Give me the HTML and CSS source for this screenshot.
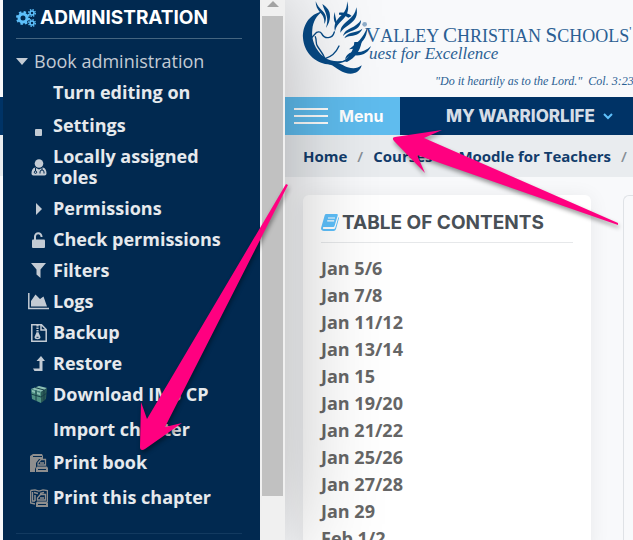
FILE: index.html
```
<!DOCTYPE html>
<html lang="en">
<head>
    <meta charset="UTF-8">
    <meta name="viewport" content="width=device-width, initial-scale=1.0">
    <title>Moodle for Teachers</title>
    <link rel="stylesheet" href="styles.css">
</head>
<body>
    <!-- edge of the page left of the drawer -->
    <div class="page-edge">
        <div class="edge-top"></div>
        <div class="edge-nav"></div>
        <div class="edge-crumbs"></div>
    </div>

    <!-- administration drawer -->
    <aside class="drawer">
        <div class="drawer-content">
            <h2 class="drawer-title">
                <svg class="cogs" width="20" height="20" viewBox="0 0 20 20">
                    <g fill="none" stroke="#5ec0fb">
                        <circle cx="7" cy="10" r="4" stroke-width="3"/>
                        <circle cx="7" cy="10" r="6" stroke-width="2" stroke-dasharray="2.4 2.3"/>
                        <circle cx="16" cy="5" r="2" stroke-width="1.6"/>
                        <circle cx="16" cy="5" r="3.3" stroke-width="1.4" stroke-dasharray="1.4 1.2"/>
                        <circle cx="16" cy="15" r="2" stroke-width="1.6"/>
                        <circle cx="16" cy="15" r="3.3" stroke-width="1.4" stroke-dasharray="1.4 1.2"/>
                    </g>
                </svg>
                ADMINISTRATION
            </h2>
            <button class="tree-toggle" type="button">
                <svg width="12" height="7" viewBox="0 0 12 7"><path d="M0 0h12L6 7z" fill="#c3cbd4"/></svg>
                Book administration
            </button>
            <ul class="tree">
                <li><a href="#"><span class="icon"></span>Turn editing on</a></li>
                <li class="spaced"><a href="#"><span class="icon"><svg class="low" width="7" height="7"><rect width="7" height="7" rx="1" fill="#c3cbd4"/></svg></span>Settings</a></li>
                <li>
                    <a class="two-lines" href="#"><span class="icon"><svg width="16" height="17" viewBox="0 0 16 17">
                        <circle cx="8" cy="4.5" r="4.3" fill="#c3cbd4"/>
                        <path d="M4 8.5 8 10.5l4-2c2.6.7 3.5 3 3.5 6 0 1-.8 2-2 2h-11c-1.2 0-2-1-2-2 0-3 .9-5.3 3.500-6z" fill="#c3cbd4"/>
                        <path d="M4.5 9v3M11 9v2m-2 3.500V13a2 2 0 0 1 4 0v1.500" fill="none" stroke="#012950"/>
                        <circle cx="4.5" cy="13.2" r="1.2" fill="none" stroke="#012950"/>
                    </svg></span>Locally assigned roles</a>
                </li>
                <li><a href="#"><span class="icon"><svg width="6" height="12"><path d="M0 0l6 6-6 6z" fill="#c3cbd4"/></svg></span>Permissions</a></li>
                <li><a href="#"><span class="icon"><svg width="13" height="16" viewBox="0 0 13 16"><path d="M3 6.500V4.500a3.200 3.200 0 0 1 6.500 0V5" fill="none" stroke="#c3cbd4" stroke-width="2"/><rect y="7.5" width="13" height="8.5" rx="1" fill="#c3cbd4"/><path d="M3 6v2" stroke="#c3cbd4" stroke-width="2"/></svg></span>Check permissions</a></li>
                <li><a href="#"><span class="icon"><svg width="15" height="15"><path d="M0 0h15L9.500 6.500V15L5.500 11.500v-5z" fill="#c3cbd4"/></svg></span>Filters</a></li>
                <li><a href="#"><span class="icon"><svg width="21" height="17" viewBox="0 0 21 17"><path d="M.8 0v15.500H21" fill="none" stroke="#c3cbd4" stroke-width="1.5"/><path d="M3 13.500V8l4.500-6.500L12 6l3.500-2.500L19 13.500z" fill="#c3cbd4"/></svg></span>Logs</a></li>
                <li><a href="#"><span class="icon"><svg width="16" height="18" viewBox="0 0 16 18"><path d="M.8.8h9.700l4.700 4.700v11.700H.8zM10 1v5h5" fill="none" stroke="#c3cbd4" stroke-width="1.5"/><path d="M6.500 1v8" stroke="#c3cbd4" stroke-width="2.2" stroke-dasharray="1.5 1"/><path d="M5.500 8.500h2l2 4.500c.4 3-6.400 3-6 0z" fill="#c3cbd4"/><path d="M5.500 13.300h2" stroke="#012950"/></svg></span>Backup</a></li>
                <li><a href="#"><span class="icon"><svg width="12" height="15" viewBox="0 0 12 15"><path d="M8 0l4 5H9.500v10H1.500L0 12.500h6.500V5h-3z" fill="#c3cbd4"/></svg></span>Restore</a></li>
                <li><a href="#"><span class="icon"><svg width="16" height="17" viewBox="0 0 16 17">
                    <path d="M0 3 8 0l8 2-6 4z" fill="#8cc0b4"/>
                    <path d="M0 3l10 3v11L1 13z" fill="#4f9183"/>
                    <path d="M10 6l6-4-1 11-5 4z" fill="#2a5a57"/>
                    <path d="M0 8l10 3 6-4M5 4.500V15M13 4v10.500M4 1.500 13 4" fill="none" stroke="#173f48"/>
                    <path d="M1 4l3 1v2L1 6zM6 6l3 1v2L6 8z" fill="#8cc0b4"/>
                </svg></span>Download IMS CP</a></li>
                <li class="tall"><a href="#"><span class="icon"></span>Import chapter</a></li>
                <li class="spaced"><a href="#"><span class="icon"><svg width="18" height="18" viewBox="0 0 18 18">
                    <path d="M0 2 3 0h9l1 2v3H9L6 9v4l-1 2v3H0z" fill="#8e8e8e"/>
                    <path d="M3 2.500h9" stroke="#012950"/>
                    <path d="M8 11V9l3-3.500h4.500V11zM10 9h4" fill="none" stroke="#8e8e8e" stroke-width="1.3"/>
                    <path d="M7 12.500h10l1 1.500v4H6v-4z" fill="#8e8e8e"/>
                    <path d="M8 15.500h8" stroke="#012950"/>
                </svg></span>Print book</a></li>
                <li class="tall"><a href="#"><span class="icon"><svg width="18" height="18" viewBox="0 0 18 18">
                    <path d="M.6 1.500 5 .8l4 1.200L13 .8l4.400.7V13M5 15l-4.400-1V1.500M2.500 3v9H5" fill="none" stroke="#8e8e8e" stroke-width="1.3"/>
                    <path d="M4 3.500l4 1M14 3.500l-4 1M5 6v6" stroke="#8e8e8e" stroke-width="1.5"/>
                    <path d="M7.500 11V9l3-3.500h5V11zM10 9h4" fill="none" stroke="#8e8e8e" stroke-width="1.3"/>
                    <path d="M7 12.500h10l1 1.500v4H6v-4z" fill="#8e8e8e"/>
                    <path d="M8 15.500h8" stroke="#012950"/>
                </svg></span>Print this chapter</a></li>
            </ul>
        </div>
        <div class="scrollbar">
            <svg width="12" height="6"><path d="M0 6l6-6 6 6z" fill="#a3a3a3"/></svg>
            <div class="thumb"></div>
        </div>
    </aside>

    <!-- course page -->
    <main class="page">
        <header class="site-header">
            <svg class="logo" width="72" height="78" viewBox="0 0 216 234">
                <g fill="#064a86">
                    <!-- Q -->
                    <path d="M72 34C30 42 10 78 12 114c3 42 34 74 74 79 22 3 44-3 58-13-26 7-50 5-69-9C48 150 36 118 40 88c2-22 12-42 32-54z"/>
                    <path d="M120 38c16-2 30 2 38 10l-10 5c-8-6-16-9-28-9z"/>
                    <path d="M166 126h22c-5 28-20 48-44 60l-12-3c20-12 32-32 34-57z"/>
                    <path d="M88 192c20-12 42 4 58 10 16 5 30 4 42-6-5 22-28 30-50 22-22-7-32-22-50-26z"/>
                    <!-- wings -->
                    <path d="M50 4c5 14 12 20 20 28 12 12 14 24 6 40 1-14-2-24-12-34C55 28 50 18 50 4z"/>
                    <path d="M70 12c14 10 24 20 23 38 0 10-4 22-12 34 4-14 5-26 2-36-3-12-9-22-13-36z"/>
                    <path d="M144 4c8 22 2 42-14 56-12 11-19 20-22 34-5-20 4-34 17-46 13-12 20-24 19-44z"/>
                    <path d="M108 36c-1 14 6 22 4 38-8-10-10-24-4-38z"/>
                    <path d="M172 22c6 24-3 40-22 52-12 8-20 14-26 24 0-16 8-24 20-34 15-12 25-22 28-42z"/>
                    <path d="M186 60c0 18-12 28-30 34-10 4-18 8-24 14 4-13 12-18 24-24 13-6 23-13 30-24z"/>
                    <path d="M190 86c-6 14-18 20-34 22-8 1-15 3-20 7 4-10 12-14 22-17 13-3 23-5 32-12z"/>
                    <path d="M204 84c2 30-18 48-40 62l-14 2c24-18 42-34 54-64z"/>
                    <path d="M216 138c-6 18-24 30-48 28-12-1-22 4-30 12 4-16 16-24 34-22 16 1 30-5 44-18z"/>
                </g>
                <!-- dove -->
                <g fill="none" stroke="#064a86" stroke-width="4" stroke-linecap="round">
                    <path d="M39 112l9-10c6-8 16-8 20-1 4 8 10 13 20 12 12-1 16-10 18-17"/>
                    <path d="M49 110c4 10 1 18 5 26 6 12 16 20 24 40"/>
                    <path d="M78 176c20-6 34-20 42-38"/>
                </g>
                <circle cx="197" cy="73" r="7" fill="#8fadc9"/>
            </svg>
            <div class="brand">
                <div class="brand-name"><b>V</b>ALLEY <b>C</b>HRISTIAN <b>S</b>CHOOLS<sup>'</sup></div>
                <div class="brand-tag">uest for Excellence</div>
                <div class="brand-verse">"Do it heartily as to the Lord."&nbsp; Col. 3:23</div>
            </div>
        </header>

        <nav class="navbar">
            <button class="menu-button" type="button">
                <svg width="34" height="16"><path d="M0 1h34M0 8h34M0 15h34" stroke="#fff" stroke-width="2"/></svg>
                Menu
            </button>
            <a class="nav-link" href="#">MY WARRIORLIFE
                <svg width="10" height="7" viewBox="0 0 10 7"><path d="M1 1l4 4 4-4" fill="none" stroke="#5ec0fb" stroke-width="2"/></svg>
            </a>
        </nav>

        <nav class="breadcrumbs">
            <a href="#">Home</a><span>/</span><a href="#">Courses</a><span>/</span><a href="#">Moodle for Teachers</a><span>/</span>
        </nav>

        <div class="columns">
            <section class="toc">
                <h2 class="toc-title">
                    <svg width="18" height="17" viewBox="0 0 18 17">
                        <path d="M5 0h10.500c1 0 1.500.6 1.200 1.500L13.700 11.500c-.3 1-1 1.500-2 1.500H3c-1.500 0-1.500 2 0 2h9.500c1 0 1.500-.4 1.800-1.300L17.500 3c.5.3.6 1 .4 1.600L15 15c-.4 1.300-1.200 2-2.500 2H3c-2 0-3.500-1.600-2.800-3.500L3.500 2C3.800.8 4.200 0 5 0z" fill="#5ec0fb"/>
                        <path d="M7 4h7M6.200 6.800h7" stroke="#fff" stroke-width="1.2"/>
                    </svg>
                    TABLE OF CONTENTS
                </h2>
                <ul>
                    <li><a href="#">Jan 5/6</a></li>
                    <li><a href="#">Jan 7/8</a></li>
                    <li><a href="#">Jan 11/12</a></li>
                    <li><a href="#">Jan 13/14</a></li>
                    <li><a href="#">Jan 15</a></li>
                    <li><a href="#">Jan 19/20</a></li>
                    <li><a href="#">Jan 21/22</a></li>
                    <li><a href="#">Jan 25/26</a></li>
                    <li><a href="#">Jan 27/28</a></li>
                    <li><a href="#">Jan 29</a></li>
                    <li><a href="#">Feb 1/2</a></li>
                </ul>
            </section>
            <section class="content-card"></section>
        </div>
    </main>

    <!-- pointer arrows on top of the page -->
    <svg class="arrows" width="633" height="540" viewBox="0 0 633 540">
        <g fill="#ff0080">
            <path d="M286 184l2 1L165 427l17-4-37 26c-3 2-5 1-5-2l1-45 6 17z"/>
            <path d="M618 223v2L417 155l8 18-31-32c-2-2-1-4 1-4l47-7-18 8z"/>
        </g>
    </svg>
</body>
</html>
```
FILE: styles.css
```
* {
    box-sizing: border-box;
}

body {
    margin: 0;
    display: flex;
    height: 100vh;
    overflow: hidden;
    position: relative;
    font-family: "Open Sans", sans-serif;
    background-color: #f8f9fb;
}

h2, ul {
    margin: 0;
    padding: 0;
}

ul {
    list-style: none;
}

a {
    text-decoration: none;
}

button {
    border: none;
    padding: 0;
    cursor: pointer;
}

/* page edge */
.page-edge {
    flex: 0 0 3px;
    z-index: 2;
    background-color: #f8f9fb;
}

.edge-top {
    height: 97px;
}

.edge-nav {
    height: 38px;
    background-color: #003366;
}

.edge-crumbs {
    height: 41px;
    background-color: #e9ecef;
}

/* drawer */
.drawer {
    flex: 0 0 282px;
    display: flex;
    z-index: 1;
    box-shadow: 0 0 100px rgba(0, 0, 0, 0.3);
}

.drawer-content {
    flex: 1;
    background-color: #012950;
    padding: 5px 18px 0 13px;
}

.drawer-title {
    display: flex;
    align-items: center;
    gap: 4px;
    height: 34px;
    padding-bottom: 8px;
    border-bottom: 1px solid #456580;
    color: #fff;
    font: 700 19px Inter, sans-serif;
    white-space: nowrap;
}

.tree-toggle {
    display: flex;
    align-items: center;
    gap: 6px;
    margin-top: 10px;
    height: 24px;
    background: none;
    color: #c3cbd4;
    font: 18px "Open Sans", sans-serif;
}

.tree {
    padding: 4px 0 20px 12px;
    border-bottom: 1px solid #123a60;
}

.tree a {
    display: flex;
    align-items: center;
    gap: 4px;
    padding: 5px 0;
    color: #e6e9ed;
    font-size: 18px;
    font-weight: 700;
    line-height: 21px;
}

.tree .two-lines {
    padding-right: 40px;
}

.tree .spaced {
    margin-top: 2px;
}

.tree .tall {
    margin-top: 4px;
}

.icon {
    flex: 0 0 21px;
    height: 21px;
    display: flex;
    align-items: center;
    justify-content: center;
}

.icon .low {
    align-self: flex-end;
}

.scrollbar {
    flex: 0 0 25px;
    display: flex;
    flex-direction: column;
    align-items: center;
    gap: 9px;
    padding-top: 1px;
    background-color: #f0f0f0;
}

.thumb {
    width: 21px;
    height: 89%;
    background-color: #c1c1c1;
}

/* page */
.page {
    flex: 1;
    min-width: 0;
    display: flex;
    flex-direction: column;
}

.site-header {
    display: flex;
    flex: 0 0 97px;
    padding-left: 14px;
    color: #2b5f93;
    font-family: "Liberation Serif", serif;
    white-space: nowrap;
}

.logo {
    flex: none;
}

.brand {
    flex: 1;
    margin-left: -6px;
    padding-top: 22px;
}

.brand-name {
    height: 22px;
    font-size: 18px;
    line-height: 26px;
}

.brand-name b {
    font-size: 21px;
    font-weight: 400;
}

.brand-name sup {
    font-size: 12px;
    line-height: 1;
}

.brand-tag {
    padding-left: 4px;
    font-size: 17px;
    font-style: italic;
    line-height: 20px;
}

.brand-verse {
    padding: 8px 0 0 70px;
    font-size: 12px;
    font-style: italic;
    line-height: 18px;
}

.navbar {
    display: flex;
    flex: 0 0 38px;
    background-color: #003366;
}

.menu-button {
    flex: 0 0 115px;
    display: flex;
    align-items: center;
    gap: 11px;
    padding-left: 9px;
    background-color: #5fbcee;
    color: #fff;
    font: 700 16px Inter, sans-serif;
}

.nav-link {
    display: flex;
    align-items: center;
    gap: 8px;
    padding-left: 46px;
    color: #d5dde6;
    font: 800 17px Inter, sans-serif;
    white-space: nowrap;
}

.breadcrumbs {
    display: flex;
    flex: 0 0 42px;
    align-items: center;
    gap: 10px;
    padding-left: 18px;
    background-color: #e9ecef;
    color: #868e96;
    font-size: 15px;
    font-weight: 700;
    white-space: nowrap;
}

.breadcrumbs a {
    color: #123c6b;
}

.breadcrumbs span {
    font-weight: 600;
}

.columns {
    flex: 1;
    display: flex;
    gap: 32px;
    padding: 18px 0 0 18px;
}

.toc {
    flex: 1;
    padding: 17px 18px 0;
    border-radius: 6px 6px 0 0;
    background-color: #fff;
    box-shadow: 0 2px 20px rgba(0, 0, 0, 0.07);
}

.toc-title {
    display: flex;
    align-items: center;
    gap: 3px;
    height: 31px;
    padding-bottom: 10px;
    border-bottom: 1px solid #e6e8ea;
    color: #495057;
    font: 700 19px Inter, sans-serif;
    white-space: nowrap;
}

.toc ul {
    padding-top: 12px;
}

.toc li {
    font-size: 18px;
    font-weight: 700;
    line-height: 27px;
}

.toc li a {
    color: #666;
}

.content-card {
    flex: 0 0 10px;
    border: 1px solid #dfe2e6;
    border-width: 1px 0 0 1px;
    border-radius: 6px 0 0 0;
}

/* arrows */
.arrows {
    position: absolute;
    z-index: 3;
    top: 0;
    left: 0;
    pointer-events: none;
    filter: drop-shadow(1px 3px 2px rgba(0, 0, 0, 0.4));
}
```
